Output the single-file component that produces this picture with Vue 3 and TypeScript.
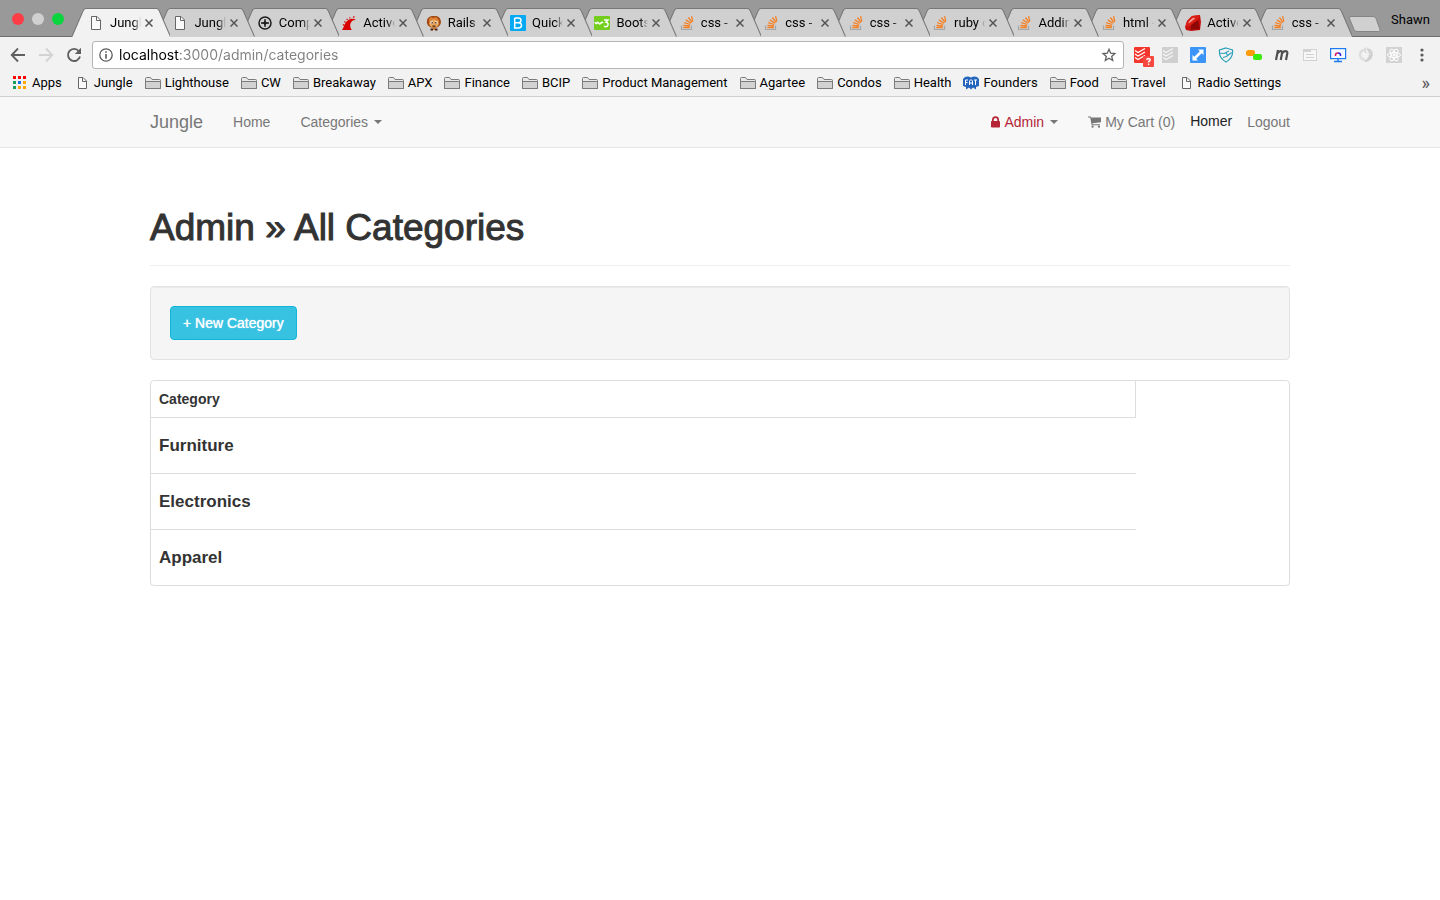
<script setup lang="ts">
type TabIcon = 'page' | 'compass' | 'rails' | 'lion' | 'bootstrap' | 'w3' | 'stack' | 'ruby'

interface Tab {
  title: string
  icon: TabIcon
}

interface Bookmark {
  label: string
  icon: 'apps' | 'page' | 'folder' | 'founders'
}

const tabs: Tab[] = [
  { title: 'Jungle', icon: 'page' },
  { title: 'Jungle', icon: 'page' },
  { title: 'Comp', icon: 'compass' },
  { title: 'Active', icon: 'rails' },
  { title: 'Rails |', icon: 'lion' },
  { title: 'Quick', icon: 'bootstrap' },
  { title: 'Boots', icon: 'w3' },
  { title: 'css -', icon: 'stack' },
  { title: 'css -', icon: 'stack' },
  { title: 'css -', icon: 'stack' },
  { title: 'ruby o', icon: 'stack' },
  { title: 'Addin', icon: 'stack' },
  { title: 'html -', icon: 'stack' },
  { title: 'Active', icon: 'ruby' },
  { title: 'css -', icon: 'stack' },
]

const bookmarks: Bookmark[] = [
  { label: 'Apps', icon: 'apps' },
  { label: 'Jungle', icon: 'page' },
  { label: 'Lighthouse', icon: 'folder' },
  { label: 'CW', icon: 'folder' },
  { label: 'Breakaway', icon: 'folder' },
  { label: 'APX', icon: 'folder' },
  { label: 'Finance', icon: 'folder' },
  { label: 'BCIP', icon: 'folder' },
  { label: 'Product Management', icon: 'folder' },
  { label: 'Agartee', icon: 'folder' },
  { label: 'Condos', icon: 'folder' },
  { label: 'Health', icon: 'folder' },
  { label: 'Founders', icon: 'founders' },
  { label: 'Food', icon: 'folder' },
  { label: 'Travel', icon: 'folder' },
  { label: 'Radio Settings', icon: 'page' },
]

const appDots = ['#f00', '#f00', '#f00', '#17a05d', '#1a73e8', '#ffa800', '#17a05d', '#ffa800', '#ffa800']

const categories: string[] = ['Furniture', 'Electronics', 'Apparel']
</script>

<template>
  <div class="window">
    <header class="chrome">
      <div class="tab-strip">
        <div class="lights">
          <button type="button" class="light red" aria-label="Close window"></button>
          <button type="button" class="light grey" aria-label="Minimize window"></button>
          <button type="button" class="light green" aria-label="Zoom window"></button>
        </div>
        <div class="tabs">
          <div
            v-for="(tab, i) in tabs"
            :key="i"
            class="tab"
            :class="{ active: i === 0 }"
            :style="{ zIndex: tabs.length - i }"
          >
            <svg class="tab-shape" viewBox="0 0 98 29" preserveAspectRatio="none" aria-hidden="true">
              <path class="fill" d="M0 29 L11 3 Q12 .5 14 .5 H84 Q86 .5 87 3 L98 29 Z" />
              <path class="edge" d="M0 28.5 L11 3 Q12 .5 14 .5 H84 Q86 .5 87 3 L98 28.5" />
            </svg>
            <button type="button" class="tab-label">
              <svg class="icon16" viewBox="0 0 16 16" aria-hidden="true">
                <g v-if="tab.icon === 'page'" fill="#fafafa" stroke="#666">
                  <path d="M3.5 1.5H9L12.5 5V14.5H3.5Z" /><path d="M8.500 1.500V5.500H12.500" fill="none" />
                </g>
                <g v-else-if="tab.icon === 'compass'" fill="none" stroke="#1c1c1c">
                  <circle cx="8" cy="8" r="6" stroke-width="1.500" />
                  <path d="M8 4V12M4 8H12" stroke-width="1.300" />
                  <path d="M8 5L9 7L11 8L9 9L8 11L7 9L5 8L7 7Z" fill="#1c1c1c" stroke="none" />
                </g>
                <g v-else-if="tab.icon === 'rails'" fill="#d90000">
                  <path d="M1 15C3 12.500 3.500 8 7 5.300C9.500 3.500 12.500 3.200 15 5C12 4.800 10 6.500 9.300 9C8.900 11 9.600 13.500 10.800 15Z" />
                  <path d="M2 9L3.800 9.800L3.400 10.900L1.700 10.300ZM3.500 6L5 7L4.400 8L3 7.100ZM6 3.500L7 4.500L6.200 5.200L5.200 4.300ZM9.200 2.100L9.600 3.300L8.600 3.600L8.100 2.500ZM13.500 1L13.200 3.200L12.300 3L12.400 1Z" />
                </g>
                <g v-else-if="tab.icon === 'lion'">
                  <path d="M1 6C1 2 5 .500 8 1C12 .300 15 3 15 7C15 10 12 13 8 13C4 13 0 10 1 6Z" fill="#a34b13" />
                  <path d="M3 4L5 2L7 3L10 2L13 5L13 7L10 5L6 5L3 7Z" fill="#db8136" />
                  <ellipse cx="8" cy="8.500" rx="4.800" ry="4" fill="#e9a75d" />
                  <path d="M4.500 6.500H7V8.500H4.500ZM9 6.500H11.500V8.500H9Z" fill="#fff" />
                  <path d="M5.500 7H6.800V8.500H5.500ZM9.200 7H10.500V8.500H9.200ZM6.500 10.500H9.500V11.700H6.500ZM4.500 13.500H7V15.500H4.500ZM9 13.500H11.500V15.500H9Z" fill="#49210e" />
                  <path d="M7 12H9V15H7Z" fill="#c97932" />
                </g>
                <g v-else-if="tab.icon === 'bootstrap'">
                  <rect width="16" height="16" rx="1" fill="#03a9f4" />
                  <path d="M4.700 3H8.500Q11 3 11 5.300Q11 7.500 8.700 7.700H4.700M8.700 7.700Q11.500 7.900 11.500 10.300Q11.500 13 8.500 13H4.700V3" fill="none" stroke="#fff" stroke-width="1.500" />
                </g>
                <g v-else-if="tab.icon === 'w3'">
                  <rect y="1" width="16" height="14" rx="1" fill="#73ce1d" />
                  <path d="M1 7Q2 9.500 3 8Q4 6.500 5 8.500Q6 9.500 7 8Q8 6.500 9 8M10 5H14L12 7.300Q14.500 7.500 14 10Q13 12.500 10 11.300" fill="none" stroke="#fff" stroke-width="1.500" />
                </g>
                <g v-else-if="tab.icon === 'stack'" fill="none">
                  <path d="M2.500 10.500V14.500H12.500V10.500" stroke="#a4a7a9" stroke-width="1.200" />
                  <path d="M4.300 12.500H10.800M4.500 10.300L10.900 11M5.200 7.700L11.300 9.500M6.800 4.900L12 8.200M9.400 2.500L13 7.300M12.600 1.200L13.800 6.700" stroke="#f48024" stroke-width="1.300" />
                </g>
                <g v-else>
                  <path d="M0 12L2 6L7 1L15 0L16 7L15 15L6 16L1 15Z" fill="#c3100c" />
                  <path d="M7 1L15 0L13 5L6 10L2 12L1 11L2 6Z" fill="#d81e15" />
                  <path d="M13 5L15 14L6 15L6 10Z" fill="#8e0705" />
                  <path d="M3 8.500Q5 4 9 2.500L10 3.500L5 7.500Z" fill="#f7a19a" />
                </g>
              </svg>
              <span class="tab-title">{{ tab.title }}</span>
            </button>
            <button type="button" class="tab-close" aria-label="Close tab">
              <svg viewBox="0 0 8 8" aria-hidden="true"><path d="M.5 .5L7.500 7.500M7.500 .5L.5 7.500" /></svg>
            </button>
          </div>
        </div>
        <button type="button" class="new-tab" aria-label="New tab">
          <svg viewBox="0 0 34 17" aria-hidden="true">
            <path d="M3 .5H25Q27 .5 28 2.500L32 13.500Q32.500 15.500 30.500 15.500H9Q7 15.500 6 13.500L1.500 2.500Q1 .5 3 .5Z" />
          </svg>
        </button>
        <button type="button" class="profile">Shawn</button>
      </div>

      <div class="toolbar">
        <button type="button" class="tool" aria-label="Back">
          <svg viewBox="0 0 16 16" aria-hidden="true"><path d="M15 8H2M8 1.500L1.700 8L8 14.500" fill="none" stroke="#5f5f5f" stroke-width="1.800" /></svg>
        </button>
        <button type="button" class="tool" aria-label="Forward">
          <svg viewBox="0 0 16 16" aria-hidden="true"><path d="M1 8H14M8 1.500L14.300 8L8 14.500" fill="none" stroke="#d3d3d3" stroke-width="1.800" /></svg>
        </button>
        <button type="button" class="tool" aria-label="Reload">
          <svg viewBox="0 0 16 16" aria-hidden="true">
            <path d="M12.800 4A6.100 6.100 0 1 0 14 9.600" fill="none" stroke="#5f5f5f" stroke-width="1.900" />
            <path d="M15 .8V7H8.800Z" fill="#5f5f5f" />
          </svg>
        </button>
        <div class="omnibox">
          <svg class="info" viewBox="0 0 14 14" aria-hidden="true">
            <circle cx="7" cy="7" r="6.200" fill="none" stroke="#5a5a5a" stroke-width="1.300" />
            <path d="M7 6V10.800M7 3.200V4.800" stroke="#5a5a5a" stroke-width="1.600" />
          </svg>
          <input class="url" type="text" aria-label="Address" value="localhost:3000/admin/categories" />
          <button type="button" class="star" aria-label="Bookmark this page">
            <svg viewBox="0 0 16 16" aria-hidden="true">
              <path d="M8 2.300L9.700 6.200L13.900 6.600L10.700 9.400L11.700 13.500L8 11.300L4.300 13.500L5.300 9.400L2.100 6.600L6.300 6.200Z" fill="none" stroke="#5f5f5f" stroke-width="1.300" />
            </svg>
          </button>
        </div>
        <div class="extensions">
          <button type="button" class="ext" aria-label="Todoist">
            <svg viewBox="0 0 20 20" aria-hidden="true">
              <rect x="0" y="0" width="16" height="16" rx="1" fill="#f3362b" />
              <path d="M1 3.500L4 5.500L11 1.500M1 7L4 9L11 5M1 10.500L4 12.500L11 8.500" fill="none" stroke="#fff" stroke-width="1.200" />
              <rect x="9" y="9" width="11" height="11" rx="1" fill="#f6483f" />
              <path d="M12.800 13Q12.900 11.500 14.500 11.500Q16.300 11.600 16.200 13Q16 13.900 14.600 14.700V15.600M14.600 16.600V18" fill="none" stroke="#fff" stroke-width="1.400" />
            </svg>
          </button>
          <button type="button" class="ext" aria-label="Todoist inactive">
            <svg viewBox="0 0 20 20" aria-hidden="true">
              <rect width="16" height="16" rx="1" fill="#cfcfcf" />
              <path d="M1 3.500L4 5.500L11 1.500M1 7L4 9L11 5M1 10.500L4 12.500L11 8.500" fill="none" stroke="#f5f5f5" stroke-width="1.200" />
            </svg>
          </button>
          <button type="button" class="ext" aria-label="Resize">
            <svg viewBox="0 0 20 20" aria-hidden="true">
              <rect width="16" height="16" rx="1" fill="#3b94f8" />
              <path d="M8 2.500H13.500V8L11.700 6.200L6.200 11.700L8 13.500H2.500V8L4.300 9.800L9.800 4.300Z" fill="#fff" />
            </svg>
          </button>
          <button type="button" class="ext" aria-label="Shield">
            <svg viewBox="0 0 20 20" aria-hidden="true">
              <path d="M8 1L14.500 3Q15.500 11 8 15Q.5 11 1.500 3ZM1.500 6L6 6.500L11 4M5 10.500L8.500 9.500L13.500 5.500M8 6L9.500 8" fill="none" stroke="#2ba0b9" stroke-width="1.200" />
            </svg>
          </button>
          <button type="button" class="ext" aria-label="Messages">
            <svg viewBox="0 0 20 20" aria-hidden="true">
              <rect x="0" y="3" width="9" height="6" rx="2.500" fill="#ff9b0b" />
              <rect x="7" y="7" width="9" height="6" rx="2" fill="#3bea0e" />
            </svg>
          </button>
          <button type="button" class="ext" aria-label="Momentum">
            <svg viewBox="0 0 20 20" aria-hidden="true">
              <path d="M2 13L4 3M3.500 6.500Q5 3.800 7 4.100Q8.500 4.400 8 6.500L6.700 13M8 6.500Q9.500 3.800 11.500 4.100Q13.800 4.300 13.300 6.500L12 13" fill="none" stroke="#505050" stroke-width="2.200" />
            </svg>
          </button>
          <button type="button" class="ext" aria-label="Notes">
            <svg viewBox="0 0 20 20" aria-hidden="true">
              <rect x="1.500" y="2.500" width="13" height="11" fill="#f7f7f7" stroke="#d2d2d2" />
              <path d="M2 3H9V5H2ZM4 7H12V8H4ZM4 10H12V11H4Z" fill="#d2d2d2" />
            </svg>
          </button>
          <button type="button" class="ext" aria-label="Screen share">
            <svg viewBox="0 0 20 20" aria-hidden="true">
              <rect x=".6" y="1.600" width="15" height="10" fill="#f5f9ff" stroke="#1e7bef" stroke-width="1.200" />
              <path d="M8 12V14.500M4 14.500H12" stroke="#1e7bef" stroke-width="1.500" />
              <path d="M5.500 9V8Q5.500 6 8 6" fill="none" stroke="#e0115f" stroke-width="1.500" />
              <path d="M8 6Q10.500 6 10.500 8V9" fill="none" stroke="#3122cf" stroke-width="1.500" />
            </svg>
          </button>
          <button type="button" class="ext" aria-label="Sync">
            <svg viewBox="0 0 20 20" aria-hidden="true">
              <path d="M8 2.500Q2 3 2 8Q2.500 12 7 13" fill="none" stroke="#dedede" stroke-width="2.500" />
              <path d="M9 2Q14.500 3 14 8Q13 13 7 14.500Q11.500 12 11.500 8" fill="#d6d6d6" stroke="#cecece" stroke-width="1.500" />
              <path d="M8.500 .5Q5.500 3 8.500 6" fill="none" stroke="#dadada" stroke-width="1.500" />
            </svg>
          </button>
          <button type="button" class="ext" aria-label="React tools">
            <svg viewBox="0 0 20 20" aria-hidden="true">
              <rect width="16" height="16" fill="#d3d3d3" />
              <g fill="none" stroke="#fff">
                <ellipse cx="8" cy="8" rx="6.500" ry="2.500" />
                <ellipse cx="8" cy="8" rx="6.500" ry="2.500" transform="rotate(60 8 8)" />
                <ellipse cx="8" cy="8" rx="6.500" ry="2.500" transform="rotate(120 8 8)" />
              </g>
              <circle cx="8" cy="8" r="1.400" fill="#fff" />
            </svg>
          </button>
          <button type="button" class="ext" aria-label="Menu">
            <svg viewBox="0 0 20 20" aria-hidden="true">
              <g fill="#5a5a5a"><circle cx="8" cy="3" r="1.600" /><circle cx="8" cy="8" r="1.600" /><circle cx="8" cy="13" r="1.600" /></g>
            </svg>
          </button>
        </div>
      </div>

      <nav class="bookmarks" aria-label="Bookmarks">
        <a v-for="mark in bookmarks" :key="mark.label" href="#" class="bookmark">
          <svg class="icon16" viewBox="0 0 16 16" aria-hidden="true">
            <g v-if="mark.icon === 'apps'">
              <rect v-for="(dot, d) in appDots" :key="d" :x="1 + (d % 3) * 5" :y="1 + Math.floor(d / 3) * 5" width="3" height="3" :fill="dot" />
            </g>
            <g v-else-if="mark.icon === 'page'" fill="#fafafa" stroke="#666">
              <path d="M4.500 2.500H9L12.500 6V13.500H4.500Z" /><path d="M8.500 2.500V6.500H12.500" fill="none" />
            </g>
            <g v-else-if="mark.icon === 'folder'" fill="#d2d2d2" stroke="#7b7b7b">
              <path d="M.5 13.500V3.500Q.5 2.500 1.500 2.500H5.500L7 4.500H14.500Q15.500 4.500 15.500 5.500V13.500Z" fill="#e9e9e9" />
              <path d="M.5 6.500H15.500V13.500H.5Z" />
            </g>
            <g v-else>
              <path d="M2 2Q5 1 8 2.500Q11 1 14 2L16 4V11L13 12V14.500L10 12.500L8 14.500L6 12.500L3 14.500V12L0 11V4Z" fill="#2466bd" />
              <path d="M2.500 10V5H5M2.500 7.500H4.500M6.500 10V6L8 4.500L9.500 6V10M6.500 8H9.500M11 5H14M12.500 5V10" fill="none" stroke="#fff" />
            </g>
          </svg>
          <span>{{ mark.label }}</span>
        </a>
        <button type="button" class="more" aria-label="More bookmarks">»</button>
      </nav>
    </header>

    <nav class="navbar" aria-label="Site">
      <div class="container navbar-inner">
        <a href="#" class="brand">Jungle</a>
        <a href="#" class="nav-link">Home</a>
        <a href="#" class="nav-link">Categories <span class="caret"></span></a>
        <div class="nav-right">
          <a href="#" class="nav-link admin">
            <svg class="lock" viewBox="0 0 9 12" aria-hidden="true">
              <path d="M1 5H0.800Q0 5 0 5.800V10.700Q0 11.500 .8 11.500H8.200Q9 11.500 9 10.700V5.800Q9 5 8.200 5H8V3.800A3.500 3.500 0 0 0 1 3.800ZM2.700 5V3.800A1.800 1.800 0 0 1 6.300 3.800V5Z" fill="#b52535" fill-rule="evenodd" />
            </svg>Admin <span class="caret"></span>
          </a>
          <a href="#" class="nav-link cart">
            <svg class="cart-icon" viewBox="0 0 13 12" aria-hidden="true">
              <path d="M0 .5H2.500Q3 .5 3.200 1.500H13V6.200L4.500 7.300L4.600 8.300H12V9.300H4Q3.500 9.300 3.600 8.700L2.200 1.500H0Z" fill="#777" />
              <circle cx="4.600" cy="10.700" r="1.100" fill="#777" /><circle cx="11" cy="10.700" r="1.100" fill="#777" />
            </svg>My Cart (0)
          </a>
          <span class="user">Homer</span>
          <a href="#" class="nav-link">Logout</a>
        </div>
      </div>
    </nav>

    <main class="container">
      <h1 class="page-header">Admin » All Categories</h1>
      <div class="well">
        <button type="button" class="new-category">+ New Category</button>
      </div>
      <div class="panel">
        <table>
          <thead>
            <tr><th scope="col">Category</th></tr>
          </thead>
          <tbody>
            <tr v-for="name in categories" :key="name">
              <td>{{ name }}</td>
            </tr>
          </tbody>
        </table>
      </div>
    </main>
  </div>
</template>

<style>
body {
  margin: 0;
  background: #fff;
}
</style>

<style scoped>
.window {
  font-family: "Liberation Sans", Arial, sans-serif;
  font-size: 14px;
  line-height: 20px;
  color: #333;
}
* {
  box-sizing: border-box;
}
button {
  border: 0;
  padding: 0;
  margin: 0;
  background: none;
  font: inherit;
  color: inherit;
}
a {
  color: inherit;
  text-decoration: none;
}
svg {
  display: block;
  flex: none;
}
.icon16 {
  width: 16px;
  height: 16px;
}

/* Browser frame */
.chrome {
  background: #f2f2f2;
  border-bottom: 1px solid #cfcfcf;
  font-family: Roboto, Inter, sans-serif;
  font-size: 13px;
  line-height: 16px;
  color: #000;
}
.tab-strip {
  display: flex;
  height: 37px;
  background: #999;
  border-bottom: 1px solid #6e6e6e;
}
.lights {
  display: flex;
  gap: 8px;
  width: 72px;
  padding: 13px 0 0 12px;
}
.light {
  width: 12px;
  height: 12px;
  border-radius: 50%;
}
.red {
  background: #fc3d46;
}
.grey {
  background: #d0d0d0;
}
.green {
  background: #0ad53f;
}
.tabs {
  display: flex;
  flex: 1;
  min-width: 0;
  height: 29px;
  margin-top: 8px;
}
.tab {
  position: relative;
  display: flex;
  flex: 1;
  min-width: 0;
  align-items: center;
  padding-left: 16px;
}
.tab-shape {
  position: absolute;
  left: 0;
  top: 0;
  width: calc(100% + 14px);
  height: 29px;
}
.fill {
  fill: #d0d0d0;
}
.edge {
  fill: none;
  stroke: #777;
}
.active .fill {
  fill: #f2f2f2;
}
.tab-label {
  position: relative;
  display: flex;
  flex: 1;
  min-width: 0;
  align-items: center;
  gap: 6px;
}
.tab-title {
  flex: 1;
  overflow: hidden;
  white-space: nowrap;
  text-align: left;
  mask-image: linear-gradient(to right, #000 75%, transparent);
}
.tab-close {
  position: relative;
  margin: 0 3px 0 4px;
}
.tab-close svg {
  width: 8px;
  height: 8px;
  fill: none;
  stroke: #555;
  stroke-width: 1.5;
}
.new-tab {
  align-self: flex-start;
  margin: 16px 9px 0 10px;
}
.new-tab svg {
  width: 34px;
  height: 17px;
  fill: #d0d0d0;
  stroke: #858585;
}
.profile {
  align-self: flex-start;
  margin: 12px 10px 0 0;
}
.toolbar {
  display: flex;
  align-items: center;
  height: 36px;
  padding-left: 10px;
}
.tool {
  margin-right: 12px;
}
.tool svg {
  width: 16px;
  height: 16px;
}
.tool + .tool + .tool {
  margin-right: 10px;
}
.omnibox {
  display: flex;
  flex: 1;
  align-items: center;
  height: 28px;
  padding: 0 6px;
  background: #fff;
  border: 1px solid #b5b5b5;
  border-radius: 3px;
}
.info {
  width: 14px;
  height: 14px;
}
.url {
  flex: 1;
  min-width: 0;
  height: 24px;
  margin-left: 6px;
  padding: 0;
  border: 0;
  outline: 0;
  font: 14px/24px Inter, Roboto, sans-serif;
  color: transparent;
  background: linear-gradient(to right, #000 60px, #808080 60px);
  background-clip: text;
}
.star svg {
  width: 16px;
  height: 16px;
}
.extensions {
  display: flex;
  gap: 8px;
  padding: 4px 6px 0 10px;
}
.ext svg {
  width: 20px;
  height: 20px;
}
.bookmarks {
  display: flex;
  align-items: center;
  height: 23px;
  padding: 0 10px 4px 12px;
}
.bookmark {
  display: flex;
  align-items: center;
  gap: 4px;
  margin-right: 12px;
  white-space: nowrap;
}
.more {
  margin-left: auto;
  font-size: 18px;
  color: #555;
}

/* Site navigation */
.container {
  max-width: 1140px;
  margin: 0 auto;
}
.navbar {
  background: #f8f8f8;
  border-bottom: 1px solid #e7e7e7;
  color: #777;
}
.navbar-inner {
  display: flex;
  align-items: center;
  height: 50px;
}
.brand {
  margin-right: 30px;
  font-size: 18px;
}
.nav-link {
  display: flex;
  align-items: center;
  margin-right: 30px;
}
.caret {
  margin-left: 6px;
  border: 4px solid transparent;
  border-top-color: #777;
  border-bottom: 0;
}
.nav-right {
  display: flex;
  align-items: center;
  margin-left: auto;
}
.nav-right .nav-link:last-child {
  margin-right: 0;
}
.admin {
  color: #b52535;
}
.lock {
  width: 9px;
  height: 12px;
  margin-right: 4px;
}
.cart-icon {
  width: 13px;
  height: 12px;
  margin-right: 4px;
}
.nav-right .cart,
.user {
  margin-right: 15px;
}
.user {
  padding-bottom: 2px;
  color: #222;
}

/* Page content */
.page-header {
  margin: 60px 0 20px;
  padding-bottom: 17px;
  border-bottom: 1px solid #eee;
  font-size: 37px;
  line-height: 40px;
  font-weight: 400;
  -webkit-text-stroke: 1px #333;
}
.well {
  padding: 19px;
  background: #f5f5f5;
  border: 1px solid #e3e3e3;
  border-radius: 4px;
  box-shadow: inset 0 1px 1px rgba(0, 0, 0, 0.05);
}
.new-category {
  display: block;
  padding: 6px 12px;
  background: #37c2e2;
  border: 1px solid #10b5d9;
  border-radius: 4px;
  color: #fff;
  text-shadow: 0 0 1px #fff;
}
.panel {
  margin-top: 20px;
  border: 1px solid #ddd;
  border-radius: 4px;
  box-shadow: 0 1px 1px rgba(0, 0, 0, 0.05);
}
table {
  width: calc(100% - 153px);
  border-spacing: 0;
}
th {
  height: 37px;
  padding: 0 8px;
  border-right: 1px solid #ddd;
  border-bottom: 1px solid #ddd;
  text-align: left;
}
td {
  height: 56px;
  padding: 0 8px;
  border-top: 1px solid #ddd;
  font-size: 17px;
  font-weight: 700;
}
tbody tr:first-child td {
  height: 55px;
  border-top: 0;
}
</style>
